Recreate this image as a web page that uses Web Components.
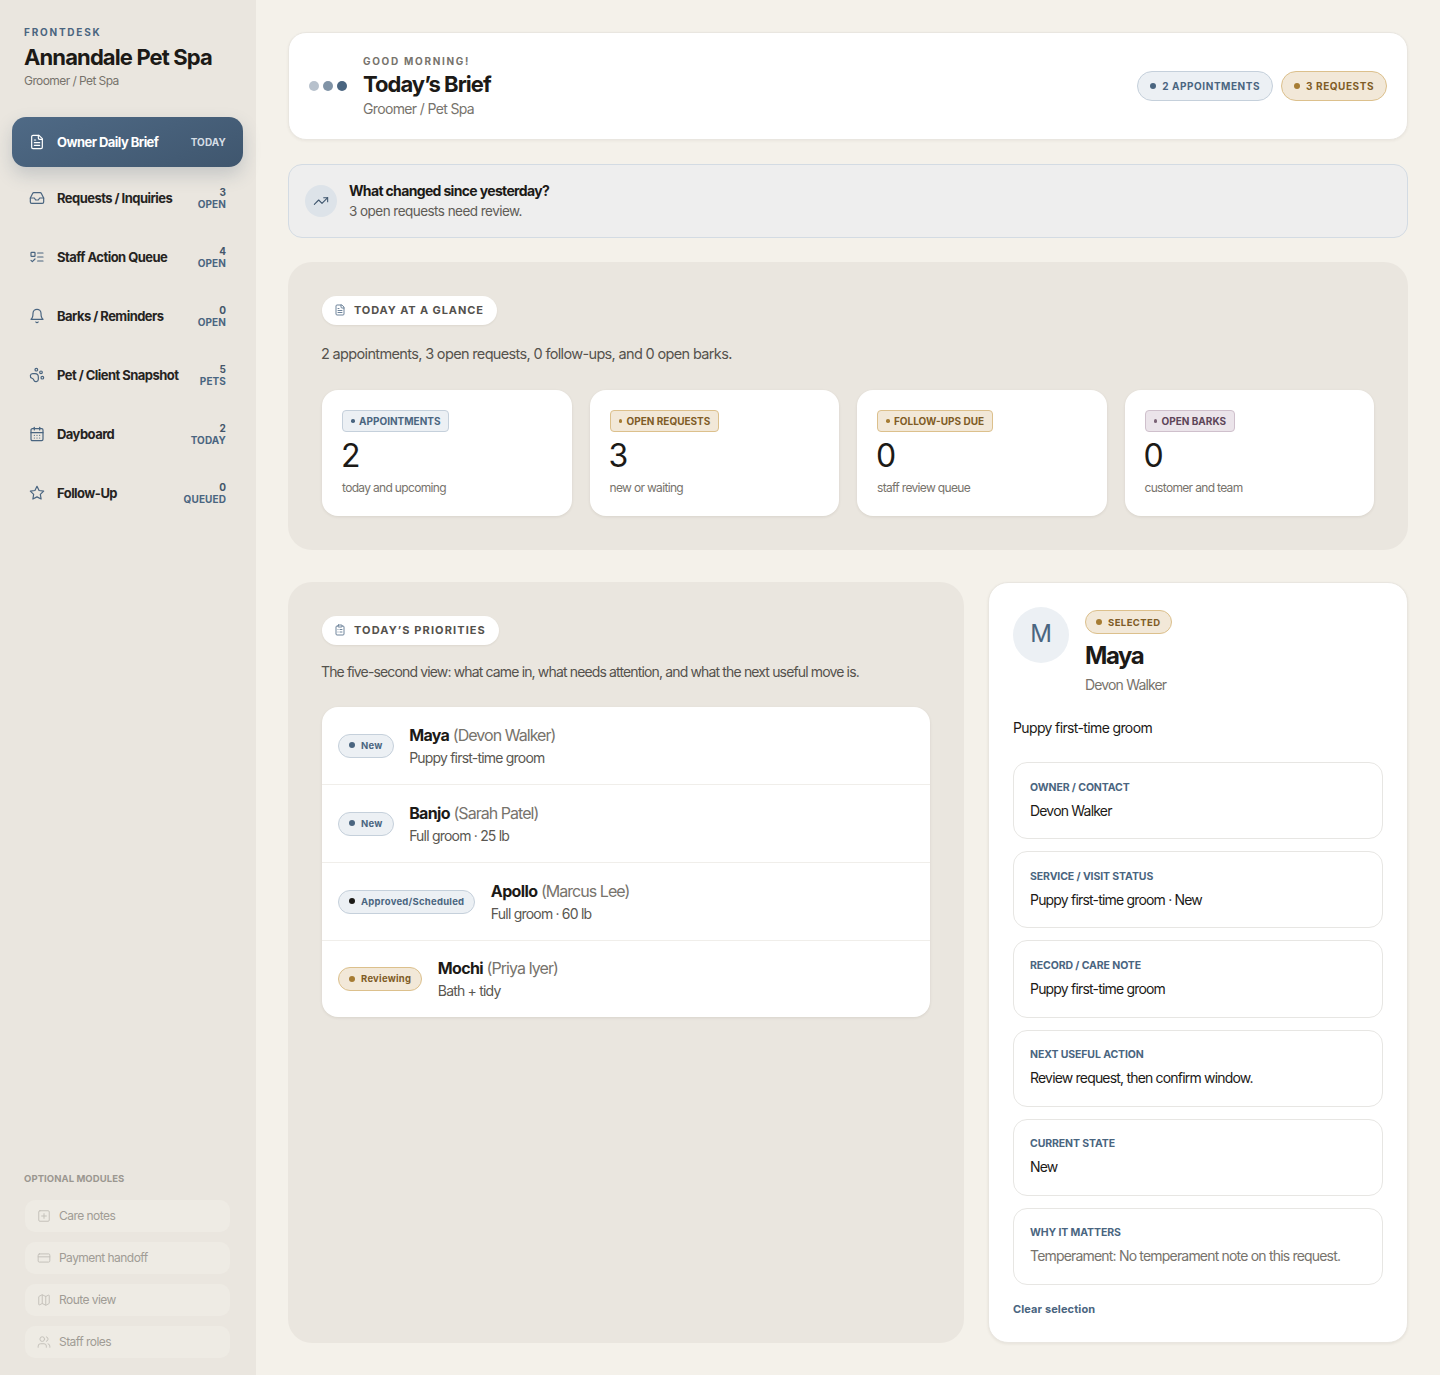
<!DOCTYPE html>
<html lang="en">
<head>
<meta charset="utf-8">
<title>Annandale Pet Spa</title>
<style>
  html, body { margin: 0; padding: 0; background: #f4f1ea; }
  body { font-family: Inter, "Liberation Sans", sans-serif; color: #1c1a17; }
</style>
</head>
<body>
<spa-app>
  <spa-sidebar slot="side">
    <nav-item icon="file-text" meta="TODAY" active>Owner Daily Brief</nav-item>
    <nav-item icon="inbox" count="3" meta="OPEN">Requests / Inquiries</nav-item>
    <nav-item icon="list-todo" count="4" meta="OPEN">Staff Action Queue</nav-item>
    <nav-item icon="bell" count="0" meta="OPEN">Barks / Reminders</nav-item>
    <nav-item icon="paw" count="5" meta="PETS">Pet / Client Snapshot</nav-item>
    <nav-item icon="calendar" count="2" meta="TODAY">Dayboard</nav-item>
    <nav-item icon="star" count="0" meta="QUEUED">Follow-Up</nav-item>
    <module-item slot="modules" icon="square-plus">Care notes</module-item>
    <module-item slot="modules" icon="card">Payment handoff</module-item>
    <module-item slot="modules" icon="map">Route view</module-item>
    <module-item slot="modules" icon="users">Staff roles</module-item>
  </spa-sidebar>

  <brief-header>
    <status-pill tone="blue">2 APPOINTMENTS</status-pill>
    <status-pill tone="gold">3 REQUESTS</status-pill>
  </brief-header>

  <change-note heading="What changed since yesterday?">3 open requests need review.</change-note>

  <spa-panel icon="file-text" label="TODAY AT A GLANCE" intro="2 appointments, 3 open requests, 0 follow-ups, and 0 open barks." gap="glance">
    <glance-grid>
      <stat-card tone="blue" label="APPOINTMENTS" value="2">today and upcoming</stat-card>
      <stat-card tone="gold" label="OPEN REQUESTS" value="3">new or waiting</stat-card>
      <stat-card tone="gold" label="FOLLOW-UPS DUE" value="0">staff review queue</stat-card>
      <stat-card tone="plum" label="OPEN BARKS" value="0">customer and team</stat-card>
    </glance-grid>
  </spa-panel>

  <two-col>
    <spa-panel icon="clipboard" label="TODAY’S PRIORITIES" intro="The five-second view: what came in, what needs attention, and what the next useful move is." gap="list">
      <priority-list>
        <priority-row tone="blue" state="New" name="Maya" owner="(Devon Walker)">Puppy first-time groom</priority-row>
        <priority-row tone="blue" state="New" name="Banjo" owner="(Sarah Patel)">Full groom · 25 lb</priority-row>
        <priority-row tone="ink" state="Approved/Scheduled" name="Apollo" owner="(Marcus Lee)">Full groom · 60 lb</priority-row>
        <priority-row tone="gold" state="Reviewing" name="Mochi" owner="(Priya Iyer)">Bath + tidy</priority-row>
      </priority-list>
    </spa-panel>
    <detail-card initial="M" name="Maya" owner="Devon Walker" summary="Puppy first-time groom">
      <detail-field label="OWNER / CONTACT">Devon Walker</detail-field>
      <detail-field label="SERVICE / VISIT STATUS">Puppy first-time groom · New</detail-field>
      <detail-field label="RECORD / CARE NOTE">Puppy first-time groom</detail-field>
      <detail-field label="NEXT USEFUL ACTION">Review request, then confirm window.</detail-field>
      <detail-field label="CURRENT STATE">New</detail-field>
      <detail-field label="WHY IT MATTERS" muted>Temperament: No temperament note on this request.</detail-field>
    </detail-card>
  </two-col>
</spa-app>

<script>
const ICONS = {
  'file-text': '<path d="M15 2H6a2 2 0 0 0-2 2v16a2 2 0 0 0 2 2h12a2 2 0 0 0 2-2V7Z"/><path d="M14 2v4a2 2 0 0 0 2 2h4"/><path d="M10 9H8"/><path d="M16 13H8"/><path d="M16 17H8"/>',
  'inbox': '<polyline points="22 12 16 12 14 15 10 15 8 12 2 12"/><path d="M5.45 5.11 2 12v6a2 2 0 0 0 2 2h16a2 2 0 0 0 2-2v-6l-3.45-6.89A2 2 0 0 0 16.76 4H7.24a2 2 0 0 0-1.79 1.11z"/>',
  'list-todo': '<rect x="3" y="5" width="6" height="6" rx="1"/><path d="m3 17 2 2 4-4"/><path d="M13 6h8"/><path d="M13 12h8"/><path d="M13 18h8"/>',
  'bell': '<path d="M6 8a6 6 0 0 1 12 0c0 7 3 9 3 9H3s3-2 3-9"/><path d="M10.3 21a1.94 1.94 0 0 0 3.4 0"/>',
  'paw': '<circle cx="11" cy="4" r="2"/><circle cx="18" cy="8" r="2"/><circle cx="20" cy="16" r="2"/><path d="M9 10a5 5 0 0 1 5 5v3.5a3.5 3.5 0 0 1-6.84 1.045Q6.52 17.48 4.46 16.84A3.5 3.5 0 0 1 5.5 10Z"/>',
  'calendar': '<path d="M8 2v4"/><path d="M16 2v4"/><rect x="3" y="4" width="18" height="18" rx="2"/><path d="M3 10h18"/><path d="M8 14h.01"/><path d="M12 14h.01"/><path d="M16 14h.01"/><path d="M8 18h.01"/><path d="M12 18h.01"/><path d="M16 18h.01"/>',
  'star': '<polygon points="12 2 15.09 8.26 22 9.27 17 14.14 18.18 21.02 12 17.77 5.82 21.02 7 14.14 2 9.27 8.91 8.26 12 2"/>',
  'square-plus': '<rect x="3" y="3" width="18" height="18" rx="2"/><path d="M8 12h8"/><path d="M12 8v8"/>',
  'card': '<rect x="2" y="5" width="20" height="14" rx="2"/><line x1="2" y1="10" x2="22" y2="10"/>',
  'map': '<path d="M14.106 5.553a2 2 0 0 0 1.788 0l3.659-1.83A1 1 0 0 1 21 4.619v12.764a1 1 0 0 1-.553.894l-4.553 2.277a2 2 0 0 1-1.788 0l-4.212-2.106a2 2 0 0 0-1.788 0l-3.659 1.83A1 1 0 0 1 3 19.381V6.618a1 1 0 0 1 .553-.894l4.553-2.277a2 2 0 0 1 1.788 0z"/><path d="M15 5.764v15"/><path d="M9 3.236v15"/>',
  'users': '<path d="M16 21v-2a4 4 0 0 0-4-4H6a4 4 0 0 0-4 4v2"/><circle cx="9" cy="7" r="4"/><path d="M22 21v-2a4 4 0 0 0-3-3.87"/><path d="M16 3.13a4 4 0 0 1 0 7.75"/>',
  'trending': '<polyline points="22 7 13.5 15.5 8.5 10.5 2 17"/><polyline points="16 7 22 7 22 13"/>',
  'clipboard': '<rect x="8" y="2" width="8" height="4" rx="1"/><path d="M16 4h2a2 2 0 0 1 2 2v14a2 2 0 0 1-2 2H6a2 2 0 0 1-2-2V6a2 2 0 0 1 2-2h2"/><path d="M12 11h4"/><path d="M12 16h4"/><path d="M8 11h.01"/><path d="M8 16h.01"/>'
};

const TONES = {
  blue: { bg: '#ecf0f4', line: '#c5d0db', text: '#4a6580', dot: '#4a6580' },
  gold: { bg: '#f2e8d8', line: '#dcc08c', text: '#7f5c26', dot: '#a67c33' },
  plum: { bg: '#ebe4ea', line: '#cfc0cc', text: '#5d4558', dot: '#7b6376' },
  ink:  { bg: '#ecf0f4', line: '#c5d0db', text: '#4a6580', dot: '#1c1a17' }
};

// small base class, every element here just sets its shadow markup once
class SpaElement extends HTMLElement {
  connectedCallback() {
    if (this.shadowRoot) return;
    this.attachShadow({ mode: 'open' }).innerHTML = this.render();
  }
  attr(name) { return this.getAttribute(name) || ''; }
}

class AppIcon extends SpaElement {
  render() {
    const size = this.attr('size') || 16;
    const width = this.attr('stroke') || 2;
    return `<style>:host{display:inline-flex;flex:none}svg{display:block}</style>
      <svg width="${size}" height="${size}" viewBox="0 0 24 24" fill="none" stroke="currentColor"
        stroke-width="${width}" stroke-linecap="round" stroke-linejoin="round">${ICONS[this.attr('name')]}</svg>`;
  }
}

class SpaApp extends SpaElement {
  render() {
    return `<style>
      :host{display:grid;grid-template-columns:256px minmax(0,1fr);min-height:1375px}
      main{display:flex;flex-direction:column;gap:24px;padding:32px;min-width:0}
    </style>
    <slot name="side"></slot>
    <main><slot></slot></main>`;
  }
}

class SpaSidebar extends SpaElement {
  render() {
    return `<style>
      :host{display:flex;flex-direction:column;background:#eae6df;padding:26px 13px 17px 12px;box-sizing:border-box}
      .brand{padding:0 12px;margin-bottom:28px}
      .eyebrow{font-size:10px;line-height:13px;font-weight:700;letter-spacing:.178em;color:#4a6580}
      h1{margin:4px 0 2px;font-size:22px;line-height:28px;font-weight:700;letter-spacing:-.04em;color:#1c1a17}
      .role{font-size:12px;line-height:16px;color:#77736c;letter-spacing:-.048em}
      nav{display:flex;flex-direction:column;gap:3px}
      .mods{margin-top:auto;padding:0 0 0 12px}
      .mods h2{margin:0 0 15px;font-size:9.5px;line-height:12px;font-weight:700;letter-spacing:.008em;color:#9b9790}
      .list{display:flex;flex-direction:column;gap:10px;margin-left:1px;width:205px}
    </style>
    <div class="brand">
      <div class="eyebrow">FRONTDESK</div>
      <h1>Annandale Pet Spa</h1>
      <div class="role">Groomer / Pet Spa</div>
    </div>
    <nav><slot></slot></nav>
    <div class="mods"><h2>OPTIONAL MODULES</h2><div class="list"><slot name="modules"></slot></div></div>`;
  }
}

class NavItem extends SpaElement {
  render() {
    const on = this.hasAttribute('active');
    const count = this.attr('count');
    return `<style>
      :host{display:flex;align-items:center;gap:12px;box-sizing:border-box;height:${on ? 50 : 56}px;padding:0 17px;
        border-radius:14px;font-size:13px;font-weight:700;letter-spacing:-.042em;color:${on ? '#fff' : '#26241f'};
        ${on ? 'background:linear-gradient(160deg,#4f6a86,#3f566e);box-shadow:0 8px 18px rgba(63,86,110,.22);' : ''}}
      app-icon{color:${on ? '#fff' : '#4a6580'}}
      .t{flex:1;white-space:nowrap}
      .m{text-align:right;font-size:10px;line-height:12px;font-weight:700;letter-spacing:.01em;color:${on ? '#d5dde5' : '#4a6580'}}
      .m b{display:block;font-weight:700;color:#45566a}
    </style>
    <app-icon name="${this.attr('icon')}" size="16" stroke="1.8"></app-icon>
    <span class="t"><slot></slot></span>
    <span class="m">${count ? `<b>${count}</b>` : ''}${this.attr('meta')}</span>`;
  }
}

class ModuleItem extends SpaElement {
  render() {
    return `<style>
      :host{display:flex;align-items:center;gap:8px;height:32px;padding:0 12px;border-radius:10px;background:#eeebe4;
        font-size:12px;letter-spacing:-.045em;color:#a09c95}
      app-icon{color:#c4c1ba}
      span{padding-bottom:2px}
    </style>
    <app-icon name="${this.attr('icon')}" size="14" stroke="1.7"></app-icon>
    <span><slot></slot></span>`;
  }
}

class StatusPill extends SpaElement {
  render() {
    const c = TONES[this.attr('tone')];
    return `<style>
      :host{display:inline-flex;align-items:center;gap:6px;height:30px;box-sizing:border-box;padding:0 12px;border-radius:15px;
        background:${c.bg};border:1px solid ${c.line};color:${c.text};font-size:10px;font-weight:700;letter-spacing:.055em}
      i{width:6px;height:6px;border-radius:50%;background:${c.dot}}
    </style><i></i><slot></slot>`;
  }
}

class BriefHeader extends SpaElement {
  render() {
    return `<style>
      :host{display:flex;align-items:center;background:#fff;border:1px solid #e9e6e0;border-radius:18px;height:108px;box-sizing:border-box;
        padding:0 20px;box-shadow:0 1px 3px rgba(60,50,30,.06)}
      .dots{display:flex;gap:4px;margin-right:16px}
      .dots i{width:10px;height:10px;border-radius:50%;background:#4a6580}
      .dots i:nth-child(1){opacity:.4}.dots i:nth-child(2){opacity:.7}
      .eb{font-size:10px;line-height:13px;font-weight:700;letter-spacing:.17em;color:#77736c}
      h2{margin:2px 0 2px;font-size:22px;line-height:28px;font-weight:700;letter-spacing:-.044em;color:#1c1a17}
      .s{font-size:14px;line-height:18px;letter-spacing:-.046em;color:#77736c}
      .end{margin-left:auto;display:flex;gap:8px}
    </style>
    <div class="dots"><i></i><i></i><i></i></div>
    <div><div class="eb">GOOD MORNING!</div><h2>Today’s Brief</h2><div class="s">Groomer / Pet Spa</div></div>
    <div class="end"><slot></slot></div>`;
  }
}

class ChangeNote extends SpaElement {
  render() {
    return `<style>
      :host{display:flex;align-items:center;gap:12px;height:74px;box-sizing:border-box;padding:0 16px;background:#eeeeee;
        border:1px solid #d3dbe3;border-radius:14px}
      .c{width:32px;height:32px;border-radius:50%;background:#dde3e9;display:flex;align-items:center;justify-content:center;color:#3f566e}
      b{display:block;font-size:14px;line-height:20px;font-weight:700;letter-spacing:-.047em;color:#1c1a17}
      span{display:block;font-size:13.5px;line-height:20px;letter-spacing:-.04em;color:#5f5c56}
    </style>
    <div class="c"><app-icon name="trending" size="16" stroke="1.6"></app-icon></div>
    <div><b>${this.attr('heading')}</b><span><slot></slot></span></div>`;
  }
}

class SpaPanel extends SpaElement {
  render() {
    const glance = this.attr('gap') === 'glance';
    return `<style>
      :host{display:block;background:#eae6df;border-radius:24px;box-sizing:border-box;
        padding:34px 34px 32px 34px;${glance ? 'height:288px;' : 'height:100%;'}}
      .tag{display:flex;width:fit-content;align-items:center;gap:8px;height:29px;box-sizing:border-box;padding:0 13px 1px 12px;border-radius:15px;background:#fff;
        box-shadow:0 1px 2px rgba(60,50,30,.08);font-size:11px;font-weight:700;letter-spacing:${glance ? '.08em' : '.1em'};color:#54514c}
      app-icon{color:#5d7690}
      p{margin:${glance ? 19 : 17}px -1px ${glance ? 26 : 25}px;font-size:${glance ? 14.5 : 14}px;line-height:20px;
        letter-spacing:${glance ? '-.045em' : '-.061em'};color:#55524d}
    </style>
    <div class="tag"><app-icon name="${this.attr('icon')}" size="12" stroke="1.8"></app-icon>${this.attr('label')}</div>
    <p>${this.attr('intro')}</p>
    <div><slot></slot></div>`;
  }
}

class GlanceGrid extends SpaElement {
  render() {
    return `<style>:host{display:grid;grid-template-columns:repeat(4,minmax(0,1fr));gap:18px}</style><slot></slot>`;
  }
}

class StatCard extends SpaElement {
  render() {
    const c = TONES[this.attr('tone')];
    return `<style>
      :host{display:block;background:#fff;border-radius:16px;height:126px;box-sizing:border-box;padding:20px 20px 0;
        box-shadow:0 1px 3px rgba(60,50,30,.1)}
      .b{display:flex;width:fit-content;align-items:center;gap:4.5px;height:22px;box-sizing:border-box;padding:0 8px;border-radius:4px;
        background:${c.bg};border:1px solid ${c.line};color:${c.text};font-size:10px;font-weight:700;letter-spacing:0;white-space:nowrap}
      i{width:3.5px;height:3.5px;border-radius:50%;background:${c.dot}}
      .v{font-size:32px;line-height:40px;font-weight:400;color:#1c1a17;margin:4px 0 0 -1px}
      .n{font-size:12px;line-height:16px;letter-spacing:-.056em;color:#77736c;margin-top:4px}
    </style>
    <div class="b"><i></i>${this.attr('label')}</div>
    <div class="v">${this.attr('value')}</div>
    <div class="n"><slot></slot></div>`;
  }
}

class PriorityList extends SpaElement {
  render() {
    return `<style>:host{display:block;background:#fff;border-radius:16px;box-shadow:0 1px 3px rgba(60,50,30,.1);overflow:hidden}</style><slot></slot>`;
  }
}

class PriorityRow extends SpaElement {
  render() {
    const c = TONES[this.attr('tone')];
    const last = !this.nextElementSibling;
    return `<style>
      :host{display:flex;align-items:center;gap:15.5px;height:${last ? 76 : 78}px;box-sizing:border-box;padding:0 16px;
        ${last ? '' : 'border-bottom:1px solid #f0eeea;'}}
      .s{display:inline-flex;align-items:center;gap:6px;height:24px;box-sizing:border-box;padding:0 10px 1px;border-radius:12px;
        background:${c.bg};border:1px solid ${c.line};color:${c.text};font-size:9.5px;font-weight:700;letter-spacing:.027em;white-space:nowrap}
      i{width:6px;height:6px;border-radius:50%;background:${c.dot}}
      .n{font-size:16px;line-height:22px;letter-spacing:-.06em;color:#77736c}
      .n b{font-weight:700;color:#1c1a17;letter-spacing:-.04em}
      .d{font-size:14px;line-height:20px;letter-spacing:-.057em;color:#5a5751;margin-top:2px}
    </style>
    <span class="s"><i></i>${this.attr('state')}</span>
    <div><div class="n"><b>${this.attr('name')}</b> ${this.attr('owner')}</div><div class="d"><slot></slot></div></div>`;
  }
}

class TwoCol extends SpaElement {
  render() {
    return `<style>:host{display:grid;grid-template-columns:676px 420px;gap:24px;margin-top:8px;height:761px}</style><slot></slot>`;
  }
}

class DetailCard extends SpaElement {
  render() {
    return `<style>
      :host{display:block;background:#fff;border:1px solid #e9e6e0;border-radius:20px;box-sizing:border-box;padding:24px;
        box-shadow:0 1px 3px rgba(60,50,30,.08)}
      .top{display:flex;gap:16px}
      .av{width:56px;height:56px;box-sizing:border-box;padding-bottom:4px;border-radius:50%;background:#ecf0f4;color:#4a6580;display:flex;align-items:center;justify-content:center;font-size:24px}
      .pill{display:flex;width:fit-content;align-items:center;gap:6px;height:24px;box-sizing:border-box;padding:0 10px;border-radius:12px;margin-top:3px;
        background:#f2e8d8;border:1px solid #dcc08c;color:#7f5c26;font-size:9.5px;font-weight:700;letter-spacing:.045em}
      .pill i{width:6px;height:6px;border-radius:50%;background:#a67c33}
      h3{margin:7px 0 5px;font-size:24px;line-height:30px;font-weight:700;letter-spacing:-.06em;color:#1c1a17}
      .o{font-size:14px;line-height:18px;letter-spacing:-.06em;color:#77736c}
      .sum{margin:24px 0 24px;font-size:14px;line-height:20px;letter-spacing:-.045em;color:#1c1a17}
      .fields{display:flex;flex-direction:column;gap:12px}
      .clear{margin-top:17px;font-size:11px;line-height:14px;font-weight:700;letter-spacing:.01em;color:#4a6580}
    </style>
    <div class="top">
      <div class="av">${this.attr('initial')}</div>
      <div><div class="pill"><i></i>SELECTED</div><h3>${this.attr('name')}</h3><div class="o">${this.attr('owner')}</div></div>
    </div>
    <div class="sum">${this.attr('summary')}</div>
    <div class="fields"><slot></slot></div>
    <div class="clear">Clear selection</div>`;
  }
}

class DetailField extends SpaElement {
  render() {
    return `<style>
      :host{display:block;border:1px solid #e7e6e3;border-radius:14px;box-sizing:border-box;height:77.2px;padding:17.5px 16px 0}
      .l{font-size:10.5px;line-height:14px;font-weight:700;letter-spacing:-.01em;color:#4a6580}
      .v{margin-top:6px;font-size:14px;line-height:20px;letter-spacing:-.058em;color:${this.hasAttribute('muted') ? '#77736c' : '#1c1a17'}}
    </style>
    <div class="l">${this.attr('label')}</div>
    <div class="v"><slot></slot></div>`;
  }
}

customElements.define('app-icon', AppIcon);
customElements.define('spa-app', SpaApp);
customElements.define('spa-sidebar', SpaSidebar);
customElements.define('nav-item', NavItem);
customElements.define('module-item', ModuleItem);
customElements.define('status-pill', StatusPill);
customElements.define('brief-header', BriefHeader);
customElements.define('change-note', ChangeNote);
customElements.define('spa-panel', SpaPanel);
customElements.define('glance-grid', GlanceGrid);
customElements.define('stat-card', StatCard);
customElements.define('priority-list', PriorityList);
customElements.define('priority-row', PriorityRow);
customElements.define('two-col', TwoCol);
customElements.define('detail-card', DetailCard);
customElements.define('detail-field', DetailField);
</script>
</body>
</html>
